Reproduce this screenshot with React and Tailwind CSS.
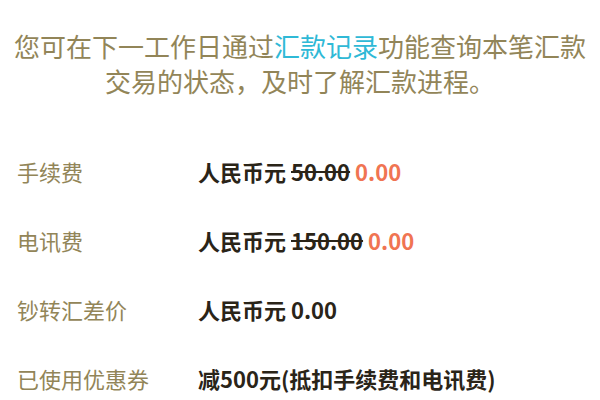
export default function App() {
  const font = { fontFamily: '"Noto Sans CJK SC", "Noto Sans", sans-serif' };
  const rows = [
    {
      label: "手续费",
      value: (
        <>
          人民币元 <span className="line-through decoration-2">50.00</span>{" "}
          <span className="text-[#f07452]">0.00</span>
        </>
      ),
    },
    {
      label: "电讯费",
      value: (
        <>
          人民币元 <span className="line-through decoration-2">150.00</span>{" "}
          <span className="text-[#f07452]">0.00</span>
        </>
      ),
    },
    { label: "钞转汇差价", value: <>人民币元 0.00</> },
    { label: "已使用优惠券", value: <>减500元(抵扣手续费和电讯费)</> },
  ];
  return (
    <div
      className="w-[600px] h-[400px] bg-white overflow-hidden"
      style={font}
    >
      <div className="pt-[28px] px-1 text-center text-[26px] leading-[35px] text-[#928558]">
        <div>
          您可在下一工作日通过<span className="text-[#2fb9d6]">汇款记录</span>功能查询本笔汇款
        </div>
        <div>交易的状态，及时了解汇款进程。</div>
      </div>
      <div className="mt-[39px]">
        {rows.map((r) => (
          <div key={r.label} className="flex items-center h-[69px]">
            <div className="w-[198px] pl-[17px] text-[22px] text-[#928558]">
              {r.label}
            </div>
            <div className="text-[22px] font-bold text-[#2a2418]">
              {r.value}
            </div>
          </div>
        ))}
      </div>
    </div>
  );
}
